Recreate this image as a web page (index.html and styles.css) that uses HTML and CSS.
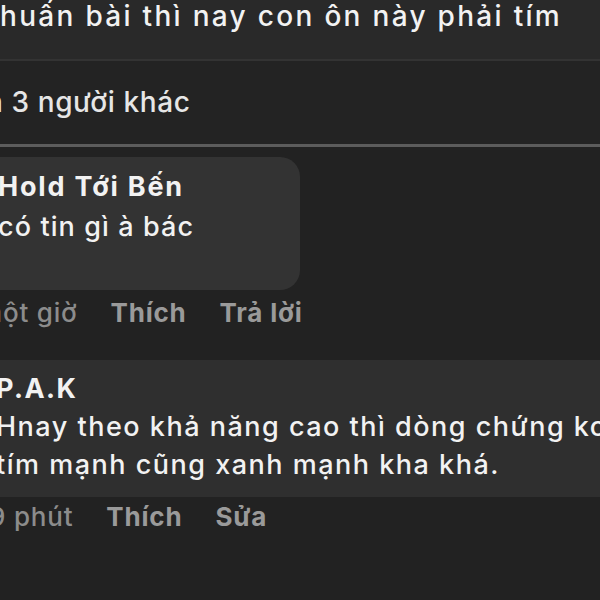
FILE: index.html
```html
<!DOCTYPE html>
<html lang="vi">
<head>
<meta charset="utf-8">
<title>Bình luận</title>
<link rel="stylesheet" href="styles.css">
</head>
<body>
<div class="page">
  <div class="post-text">huấn bài thì nay con ôn này phải tím</div>
  <div class="sep-thin"></div>
  <div class="likes">n 3 người khác</div>
  <div class="sep-thick"></div>

  <div class="comment">
    <div class="bubble">
      <div class="name name-reply">Hold Tới Bến</div>
      <div class="body">có tin gì à bác</div>
    </div>
    <div class="actions actions-first">
      <span class="time time-1">một giờ</span>
      <span class="act">Thích</span>
      <span class="act">Trả lời</span>
    </div>
  </div>

  <div class="comment comment-own">
    <div class="band">
      <div class="name">P.A.K</div>
      <div class="body">Hnay theo khả năng cao thì dòng chứng ko</div>
      <div class="body">tím mạnh cũng xanh mạnh kha khá.</div>
    </div>
    <div class="actions actions-second">
      <span class="time time-2">9 phút</span>
      <span class="act">Thích</span>
      <span class="act">Sửa</span>
    </div>
  </div>
</div>
</body>
</html>
```

FILE: styles.css
```css
html, body {
  margin: 0;
  padding: 0;
  background: #222222;
}
body {
  width: 600px;
  height: 600px;
  overflow: hidden;
  font-family: Inter, "Liberation Sans", sans-serif;
  color: #f2f2f2;
}
.page {
  display: flex;
  flex-direction: column;
  width: 600px;
  overflow: hidden;
}
.post-text {
  height: 59px;
  background: #292929;
  font-size: 28px;
  font-weight: 500;
  line-height: 32px;
  letter-spacing: 2.3px;
  white-space: nowrap;
}
.sep-thin {
  height: 2px;
  background: #333333;
}
.likes {
  height: 83px;
  box-sizing: border-box;
  padding-top: 23px;
  background: #232323;
  font-size: 28px;
  font-weight: 500;
  line-height: 36px;
  letter-spacing: 0.6px;
  color: #e6e6e6;
  margin-left: -14px;
  white-space: nowrap;
}
.sep-thick {
  height: 3px;
  background: #5c5c5c;
}
.comment {
  display: flex;
  flex-direction: column;
}
.bubble {
  margin-top: 10px;
  margin-left: -30px;
  width: 330px;
  height: 133px;
  box-sizing: border-box;
  padding: 10px 0 0 28px;
  background: #333333;
  border-radius: 20px;
}
.name {
  font-size: 27px;
  font-weight: 700;
  line-height: 40px;
  letter-spacing: 1.4px;
  white-space: nowrap;
}
.name-reply {
  letter-spacing: 1.8px;
}
.body {
  font-size: 27px;
  font-weight: 500;
  line-height: 40px;
  letter-spacing: 1.1px;
  white-space: nowrap;
}
.band .name,
.band .body {
  line-height: 38px;
}
.band .body {
  letter-spacing: 1.5px;
}
.actions {
  display: flex;
  gap: 33px;
  font-size: 26px;
  line-height: 36px;
  letter-spacing: 0.8px;
  white-space: nowrap;
}
.actions-first {
  margin-top: 5px;
}
.actions-second {
  margin-top: 2px;
}
.time {
  color: #8c8c8c;
  font-weight: 500;
}
.time-1 {
  margin-left: -21px;
}
.time-2 {
  margin-left: -11px;
}
.act {
  color: #9a9a9a;
  font-weight: 700;
}
.comment-own {
  margin-top: 29px;
}
.band {
  height: 137px;
  box-sizing: border-box;
  padding: 10px 0 0 0;
  margin-left: -4px;
  background: #2f2f2f;
}
```
